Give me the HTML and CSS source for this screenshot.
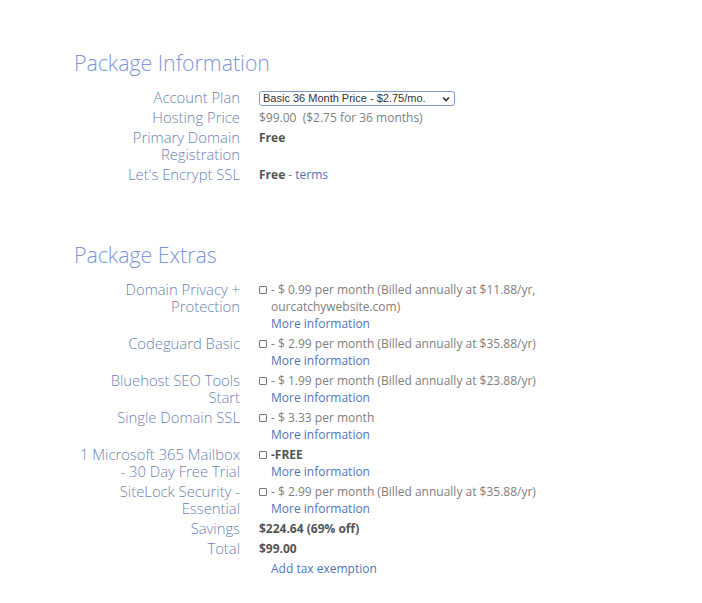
FILE: index.html
```html
<!DOCTYPE html>
<html>
<head>
<meta charset="utf-8">
<link rel="stylesheet" href="styles.css">
</head>
<body>
<div class="page">
  <section class="block">
    <h2 class="title">Package Information</h2>
    <div class="grid">
      <div class="label">Account Plan</div>
      <div class="value">
        <div class="select"><span>Basic 36 Month Price - $2.75/mo.</span>
          <svg class="chev" width="8" height="6" viewBox="0 0 8 6"><path d="M1 1.5 L4 4.5 L7 1.5" fill="none" stroke="#333" stroke-width="1.6"/></svg>
        </div>
      </div>
      <div class="label">Hosting Price</div>
      <div class="value">$99.00&nbsp; ($2.75 for 36 months)</div>
      <div class="label">Primary Domain Registration</div>
      <div class="value"><b>Free</b></div>
      <div class="label">Let's Encrypt SSL</div>
      <div class="value"><b>Free</b> - <a class="link">terms</a></div>
    </div>
  </section>

  <section class="block extras">
    <h2 class="title">Package Extras</h2>
    <div class="grid">
      <div class="label">Domain Privacy + Protection</div>
      <div class="value opt"><span class="box"></span><div class="txt">- $ 0.99 per month (Billed annually at $11.88/yr, ourcatchywebsite.com)<br><a class="link">More information</a></div></div>

      <div class="label">Codeguard Basic</div>
      <div class="value opt"><span class="box"></span><div class="txt">- $ 2.99 per month (Billed annually at $35.88/yr)<br><a class="link">More information</a></div></div>

      <div class="label">Bluehost SEO Tools Start</div>
      <div class="value opt"><span class="box"></span><div class="txt">- $ 1.99 per month (Billed annually at $23.88/yr)<br><a class="link">More information</a></div></div>

      <div class="label">Single Domain SSL</div>
      <div class="value opt"><span class="box"></span><div class="txt">- $ 3.33 per month<br><a class="link">More information</a></div></div>

      <div class="label">1 Microsoft 365 Mailbox - 30 Day Free Trial</div>
      <div class="value opt"><span class="box"></span><div class="txt"><b>-FREE</b><br><a class="link">More information</a></div></div>

      <div class="label">SiteLock Security - Essential</div>
      <div class="value opt"><span class="box"></span><div class="txt">- $ 2.99 per month (Billed annually at $35.88/yr)<br><a class="link">More information</a></div></div>

      <div class="label">Savings</div>
      <div class="value"><b>$224.64 (69% off)</b></div>

      <div class="label">Total</div>
      <div class="value"><b>$99.00</b><a class="link tax">Add tax exemption</a></div>
    </div>
  </section>
</div>
</body>
</html>
```

FILE: styles.css
```css
html, body {
  margin: 0;
  padding: 0;
  background: #fff;
}
body {
  font-family: "Open Sans", "Liberation Sans", sans-serif;
}
.page {
  padding: 47px 0 0 74px;
}
.title {
  margin: 0 0 10px 0;
  font-weight: 300;
  font-size: 21.3px;
  line-height: 32px;
  color: #7b97d6;
}
.block.extras {
  margin-top: 56px;
}
.grid {
  display: grid;
  grid-template-columns: 162px 300px;
  column-gap: 19px;
  row-gap: 3px;
  margin-left: 4px;
}
.label {
  text-align: right;
  font-weight: 300;
  font-size: 14.8px;
  line-height: 17px;
  color: #6a84b3;
}
.value {
  font-size: 12px;
  line-height: 17px;
  color: #808080;
}
.value b {
  font-weight: 700;
  color: #555;
}
.link {
  color: #5274b6;
  text-decoration: none;
}
.tax {
  display: block;
  margin: 3px 0 0 12px;
}
.opt {
  display: flex;
  align-items: flex-start;
}
.box {
  flex: none;
  width: 6px;
  height: 6px;
  border: 1px solid #777;
  border-radius: 1px;
  margin: 5px 4px 0 0;
}
.select {
  display: inline-flex;
  align-items: center;
  justify-content: space-between;
  box-sizing: border-box;
  width: 196px;
  height: 15px;
  margin-top: 1px;
  padding: 0 4px 0 3px;
  border: 1px solid #7f9ccc;
  border-radius: 3px;
  font-family: "Liberation Sans", Arial, sans-serif;
  font-size: 11px;
  line-height: 13px;
  color: #333;
}
.chev {
  display: block;
}
```
